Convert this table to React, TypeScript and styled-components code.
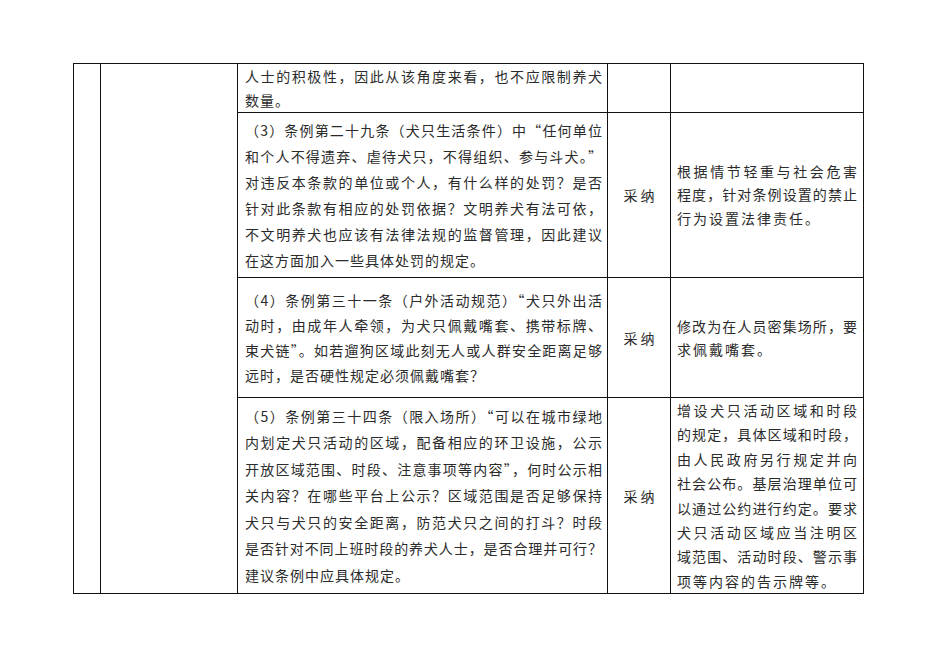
import styled, { createGlobalStyle } from "styled-components";

const GlobalStyle = createGlobalStyle`
    html, body {
        margin: 0;
        padding: 0;
        background: #ffffff;
    }
    body {
        font-family: "Noto Sans CJK SC", "Noto Sans", sans-serif;
        color: #2b2b2b;
    }
`;

const Page = styled.div`
    width: 936px;
    height: 662px;
    box-sizing: border-box;
    padding: 63px 0 0 73px;
    background: #ffffff;
`;

const Sheet = styled.table`
    border-collapse: collapse;
    table-layout: fixed;
    width: 790px;
    td {
        border: 1px solid #111;
        padding: 0;
    }
`;

const Col = styled.col<{ $w: number }>`
    width: ${(p) => p.$w}px;
`;

const Row = styled.tr<{ $h: number }>`
    height: ${(p) => p.$h}px;
`;

const TextCell = styled.td<{ $pad?: string }>`
    vertical-align: middle;
    padding: ${(p) => p.$pad || "0 5px 0 7px"} !important;
    font-size: 14px;
`;

// full lines are stretched to the cell width; the closing line keeps the same pitch
const Line = styled.span<{ $lh: number; $last?: boolean; $ls: number }>`
    display: block;
    line-height: ${(p) => p.$lh}px;
    white-space: nowrap;
    text-align: justify;
    text-align-last: ${(p) => (p.$last ? "left" : "justify")};
    letter-spacing: ${(p) => (p.$last ? p.$ls : 0)}px;
`;

const StatusCell = styled.td`
    text-align: center;
    vertical-align: middle;
    font-size: 14px;
    letter-spacing: 3px;
    text-indent: 3px;
`;

type RowData = {
    h: number;
    opinion: string[];
    status?: string;
    reply: string[];
    replyLh?: number;
    opinionLh?: number;
};

const widths = [27, 137, 370, 63, 193];

const rows: RowData[] = [
    {
        h: 48,
        opinion: ["人士的积极性，因此从该角度来看，也不应限制养犬", "数量。"],
        reply: [],
        opinionLh: 24,
    },
    {
        h: 165,
        opinion: [
            "（3）条例第二十九条（犬只生活条件）中“任何单位",
            "和个人不得遗弃、虐待犬只，不得组织、参与斗犬。”",
            "对违反本条款的单位或个人，有什么样的处罚？是否",
            "针对此条款有相应的处罚依据？文明养犬有法可依，",
            "不文明养犬也应该有法律法规的监督管理，因此建议",
            "在这方面加入一些具体处罚的规定。",
        ],
        status: "采纳",
        reply: ["根据情节轻重与社会危害", "程度，针对条例设置的禁止", "行为设置法律责任。"],
        opinionLh: 26,
        replyLh: 23.5,
    },
    {
        h: 120,
        opinion: [
            "（4）条例第三十一条（户外活动规范）“犬只外出活",
            "动时，由成年人牵领，为犬只佩戴嘴套、携带标牌、",
            "束犬链”。如若遛狗区域此刻无人或人群安全距离足够",
            "远时，是否硬性规定必须佩戴嘴套？",
        ],
        status: "采纳",
        reply: ["修改为在人员密集场所，要", "求佩戴嘴套。"],
        opinionLh: 25,
        replyLh: 23,
    },
    {
        h: 196,
        opinion: [
            "（5）条例第三十四条（限入场所）“可以在城市绿地",
            "内划定犬只活动的区域，配备相应的环卫设施，公示",
            "开放区域范围、时段、注意事项等内容”，何时公示相",
            "关内容？在哪些平台上公示？区域范围是否足够保持",
            "犬只与犬只的安全距离，防范犬只之间的打斗？时段",
            "是否针对不同上班时段的养犬人士，是否合理并可行？",
            "建议条例中应具体规定。",
        ],
        status: "采纳",
        reply: [
            "增设犬只活动区域和时段",
            "的规定，具体区域和时段，",
            "由人民政府另行规定并向",
            "社会公布。基层治理单位可",
            "以通过公约进行约定。要求",
            "犬只活动区域应当注明区",
            "域范围、活动时段、警示事",
            "项等内容的告示牌等。",
        ],
        opinionLh: 26.5,
        replyLh: 24.4,
    },
];

function Lines({ items, lh, ls }: { items: string[]; lh: number; ls: number }) {
    return (
        <>
            {items.map((t, i) => (
                <Line key={i} $lh={lh} $ls={ls} $last={i === items.length - 1}>
                    {t}
                </Line>
            ))}
        </>
    );
}

function App() {
    return (
        <Page>
            <GlobalStyle />
            <Sheet>
                <colgroup>
                    {widths.map((w, i) => (
                        <Col key={i} $w={w} />
                    ))}
                </colgroup>
                <tbody>
                    {rows.map((r, i) => (
                        <Row key={i} $h={r.h}>
                            {i === 0 && (
                                <>
                                    <td rowSpan={rows.length} />
                                    <td rowSpan={rows.length} />
                                </>
                            )}
                            <TextCell>
                                <Lines items={r.opinion} lh={r.opinionLh || 26} ls={1} />
                            </TextCell>
                            <StatusCell>{r.status}</StatusCell>
                            <TextCell $pad="0 6px 0 6px">
                                <Lines items={r.reply} lh={r.replyLh || 25} ls={2} />
                            </TextCell>
                        </Row>
                    ))}
                </tbody>
            </Sheet>
        </Page>
    );
}

export default App;
